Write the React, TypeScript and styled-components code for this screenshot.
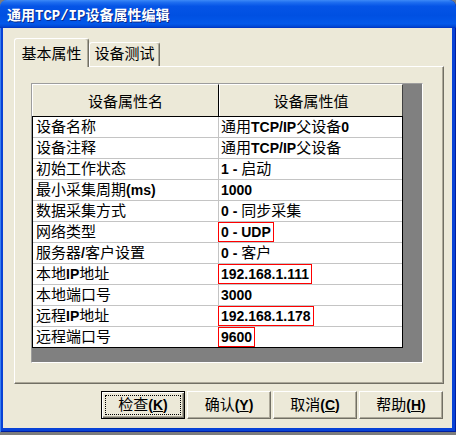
import styled, { createGlobalStyle } from "styled-components";

const GlobalStyle = createGlobalStyle`
  html, body {
    margin: 0;
    padding: 0;
    background: #7d7d7d;
  }
  body {
    font-family: "Noto Sans CJK SC", sans-serif;
  }
  * {
    box-sizing: border-box;
  }
`;

const CJK = `"Liberation Sans", "Noto Sans CJK SC", sans-serif`;

const Win = {
  frame: styled.div`
    width: 456px;
    height: 432px;
    display: flex;
    flex-direction: column;
    background: #0842d6;
    border-radius: 7px 7px 0 0;
    padding: 0 4px 4px 3px;
    box-shadow: inset 1px 0 #3b7ff0, inset -1px 0 #001ea0, inset 0 -1px #001ea0;
  `,
  titleBar: styled.div`
    height: 28px;
    margin: 0 -4px 0 -3px;
    padding-left: 7px;
    display: flex;
    align-items: center;
    border-radius: 7px 7px 0 0;
    background: linear-gradient(
      to bottom,
      #3d8af7 0%,
      #1f6ff0 8%,
      #0554e6 22%,
      #0050e2 55%,
      #0358ea 85%,
      #0049d6 94%,
      #0030c0 100%
    );
    color: #fff;
    font-family: "Liberation Mono", "Noto Sans CJK SC", monospace;
    font-size: 14px;
    font-weight: bold;
    text-shadow: 1px 1px #0b2a8c;
    letter-spacing: 0;
  `,
  client: styled.div`
    flex: 1;
    background: #ece9d8;
    padding: 10px 8px 9px 11px;
    display: flex;
    flex-direction: column;
  `,
};

const Tabs = {
  strip: styled.div`
    height: 29px;
    margin-bottom: -1px;
    display: flex;
    align-items: flex-start;
    position: relative;
    z-index: 1;
  `,
  tab: styled.div<{ $active?: boolean }>`
    width: ${(p) => (p.$active ? 75 : 71)}px;
    height: ${(p) => (p.$active ? 29 : 24)}px;
    margin-top: ${(p) => (p.$active ? 0 : 4)}px;
    background: #ece9d8;
    border-top: 1px solid #fff;
    border-left: 1px solid #fff;
    border-right: 1px solid #716f64;
    box-shadow: inset -1px 0 #aca899;
    border-radius: 3px 3px 0 0;
    display: flex;
    justify-content: center;
    padding-top: ${(p) => (p.$active ? 5 : 1)}px;
    font-family: ${CJK};
    font-size: 15px;
    line-height: 20px;
    color: #000;
  `,
  panel: styled.div`
    height: 318px;
    border: 1px solid;
    border-color: #fff #716f64 #716f64 #fff;
    box-shadow: inset -1px -1px #aca899;
    padding: 16px 19px 20px 16px;
  `,
};

const Grid = {
  frame: styled.div`
    width: 392px;
    height: 280px;
    border: 1px solid;
    border-color: #9d9d9d #fff #fff #9d9d9d;
    background: #808080;
  `,
  table: styled.div`
    width: 371px;
  `,
  header: styled.div`
    display: grid;
    grid-template-columns: 187px 184px;
    border-bottom: 1px solid #000;
  `,
  headCell: styled.div<{ $last?: boolean }>`
    height: 32px;
    background: #ece9d8;
    border-top: 1px solid #fff;
    border-left: 1px solid #fff;
    border-right: 1px solid ${(p) => (p.$last ? "#404040" : "#000")};
    display: flex;
    align-items: center;
    justify-content: center;
    font-family: ${CJK};
    font-size: 15px;
    color: #000;
  `,
  body: styled.div`
    background: #fff;
    border: 1px solid #000;
    border-top: none;
  `,
  row: styled.div`
    display: grid;
    grid-template-columns: 186px 183px;
    height: 21px;
    border-bottom: 1px solid #c4c4c4;
    &:last-child {
      height: 20px;
      border-bottom: none;
    }
  `,
  cell: styled.div<{ $first?: boolean }>`
    height: 20px;
    line-height: 20px;
    padding-left: ${(p) => (p.$first ? 3 : 2)}px;
    border-right: ${(p) => (p.$first ? "1px solid #c4c4c4" : "none")};
    font-family: ${CJK};
    font-size: 15px;
    color: #000;
    white-space: nowrap;
    overflow: visible;
  `,
};

const Latin = styled.b`
  font-family: "Liberation Sans", Arial, sans-serif;
  font-size: 14px;
  font-weight: bold;
  white-space: pre;
`;

const Mark = styled.span`
  display: inline-block;
  height: 20px;
  line-height: 18px;
  margin-left: -3px;
  padding: 0 2px 0 2px;
  border: 1px solid #ff0000;
  vertical-align: top;
`;

const Buttons = {
  row: styled.div`
    display: flex;
    justify-content: flex-end;
    gap: 2px;
    margin-top: 7px;
    padding-right: 1px;
  `,
  button: styled.button<{ $default?: boolean }>`
    position: relative;
    width: 84px;
    height: 28px;
    padding: 0;
    margin: 0;
    background: #ece9d8;
    color: #000;
    font-family: ${CJK};
    font-size: 15px;
    line-height: 20px;
    border: 1px solid;
    border-color: ${(p) => (p.$default ? "#000" : "#fff #716f64 #716f64 #fff")};
    box-shadow: ${(p) =>
      p.$default
        ? "inset 1px 1px #fff, inset -1px -1px #716f64, inset -2px -2px #aca899"
        : "inset -1px -1px #aca899"};
    &::after {
      content: "";
      display: ${(p) => (p.$default ? "block" : "none")};
      position: absolute;
      inset: 3px;
      border: 1px dotted #000;
    }
  `,
};

function Mixed({ text }: { text: string }) {
  const parts = text.split(/([\x20-\x7e]+)/);
  return <>{parts.map((p, i) => (i % 2 ? <Latin key={i}>{p}</Latin> : p))}</>;
}

const rows: { name: string; value: string; marked?: boolean }[] = [
  { name: "设备名称", value: "通用TCP/IP父设备0" },
  { name: "设备注释", value: "通用TCP/IP父设备" },
  { name: "初始工作状态", value: "1 - 启动" },
  { name: "最小采集周期(ms)", value: "1000" },
  { name: "数据采集方式", value: "0 - 同步采集" },
  { name: "网络类型", value: "0 - UDP", marked: true },
  { name: "服务器/客户设置", value: "0 - 客户" },
  { name: "本地IP地址", value: "192.168.1.111", marked: true },
  { name: "本地端口号", value: "3000" },
  { name: "远程IP地址", value: "192.168.1.178", marked: true },
  { name: "远程端口号", value: "9600", marked: true },
];

const buttons = [
  { label: "检查", key: "K", def: true },
  { label: "确认", key: "Y" },
  { label: "取消", key: "C" },
  { label: "帮助", key: "H" },
];

export default function App() {
  return (
    <>
      <GlobalStyle />
      <Win.frame>
        <Win.titleBar>通用TCP/IP设备属性编辑</Win.titleBar>
        <Win.client>
          <Tabs.strip>
            <Tabs.tab $active>基本属性</Tabs.tab>
            <Tabs.tab>设备测试</Tabs.tab>
          </Tabs.strip>
          <Tabs.panel>
            <Grid.frame>
              <Grid.table>
                <Grid.header>
                  <Grid.headCell>设备属性名</Grid.headCell>
                  <Grid.headCell $last>设备属性值</Grid.headCell>
                </Grid.header>
                <Grid.body>
                  {rows.map((r) => (
                    <Grid.row key={r.name}>
                      <Grid.cell $first>
                        <Mixed text={r.name} />
                      </Grid.cell>
                      <Grid.cell>
                        {r.marked ? (
                          <Mark>
                            <Mixed text={r.value} />
                          </Mark>
                        ) : (
                          <Mixed text={r.value} />
                        )}
                      </Grid.cell>
                    </Grid.row>
                  ))}
                </Grid.body>
              </Grid.table>
            </Grid.frame>
          </Tabs.panel>
          <Buttons.row>
            {buttons.map((b) => (
              <Buttons.button key={b.key} $default={b.def}>
                {b.label}
                <Latin>
                  (<u>{b.key}</u>)
                </Latin>
              </Buttons.button>
            ))}
          </Buttons.row>
        </Win.client>
      </Win.frame>
    </>
  );
}
